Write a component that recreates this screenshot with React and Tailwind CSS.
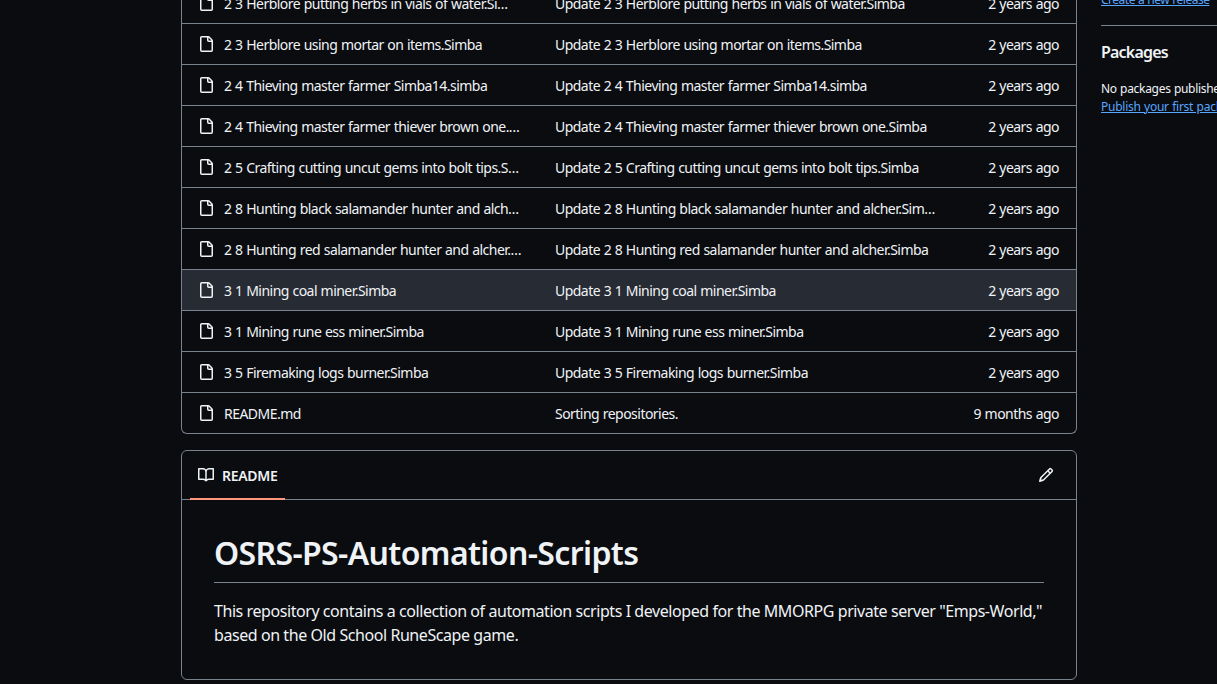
const files = [
  { name: "2 3 Herblore putting herbs in vials of water.Simba", message: "Update 2 3 Herblore putting herbs in vials of water.Simba", age: "2 years ago", namePad: "pr-2" },
  { name: "2 3 Herblore using mortar on items.Simba", message: "Update 2 3 Herblore using mortar on items.Simba", age: "2 years ago" },
  { name: "2 4 Thieving master farmer Simba14.simba", message: "Update 2 4 Thieving master farmer Simba14.simba", age: "2 years ago" },
  { name: "2 4 Thieving master farmer thiever brown one.Simba", message: "Update 2 4 Thieving master farmer thiever brown one.Simba", age: "2 years ago" },
  { name: "2 5 Crafting cutting uncut gems into bolt tips.Simba", message: "Update 2 5 Crafting cutting uncut gems into bolt tips.Simba", age: "2 years ago" },
  { name: "2 8 Hunting black salamander hunter and alcher.Simba", message: "Update 2 8 Hunting black salamander hunter and alcher.Simba", age: "2 years ago" },
  { name: "2 8 Hunting red salamander hunter and alcher.Simba", message: "Update 2 8 Hunting red salamander hunter and alcher.Simba", age: "2 years ago" },
  { name: "3 1 Mining coal miner.Simba", message: "Update 3 1 Mining coal miner.Simba", age: "2 years ago", hover: true },
  { name: "3 1 Mining rune ess miner.Simba", message: "Update 3 1 Mining rune ess miner.Simba", age: "2 years ago" },
  { name: "3 5 Firemaking logs burner.Simba", message: "Update 3 5 Firemaking logs burner.Simba", age: "2 years ago" },
  { name: "README.md", message: "Sorting repositories.", age: "9 months ago" },
];

function FileIcon() {
  return (
    <svg width="16" height="16" viewBox="0 0 16 16" fill="currentColor" className="shrink-0">
      <path d="M2 1.75C2 .784 2.784 0 3.75 0h6.586c.464 0 .909.184 1.237.513l2.914 2.914c.329.328.513.773.513 1.237v9.586A1.75 1.75 0 0 1 13.25 16h-9.5A1.75 1.75 0 0 1 2 14.25Zm1.75-.25a.25.25 0 0 0-.25.25v12.5c0 .138.112.25.25.25h9.5a.25.25 0 0 0 .25-.25V6h-2.75A1.75 1.75 0 0 1 9 4.25V1.5Zm6.75.062V4.25c0 .138.112.25.25.25h2.688l-.011-.013-2.914-2.914-.013-.011Z" />
    </svg>
  );
}

function BookIcon() {
  return (
    <svg width="16" height="16" viewBox="0 0 16 16" fill="currentColor" className="shrink-0">
      <path d="M0 1.75A.75.75 0 0 1 .75 1h4.253c1.227 0 2.317.59 3 1.501A3.743 3.743 0 0 1 11.006 1h4.245a.75.75 0 0 1 .75.75v10.5a.75.75 0 0 1-.75.75h-4.507a2.25 2.25 0 0 0-1.591.659l-.622.621a.75.75 0 0 1-1.06 0l-.622-.621A2.25 2.25 0 0 0 5.258 13H.75a.75.75 0 0 1-.75-.75Zm7.251 10.324.004-5.073-.002-2.253A2.25 2.25 0 0 0 5.003 2.5H1.5v9h3.757a3.75 3.75 0 0 1 1.994.574ZM8.755 4.75l-.004 7.322a3.752 3.752 0 0 1 1.992-.572H14.5v-9h-3.495a2.25 2.25 0 0 0-2.25 2.25Z" />
    </svg>
  );
}

function PencilIcon() {
  return (
    <svg width="16" height="16" viewBox="0 0 16 16" fill="currentColor" className="shrink-0">
      <path d="M11.013 1.427a1.75 1.75 0 0 1 2.474 0l1.086 1.086a1.75 1.75 0 0 1 0 2.474l-8.61 8.61c-.21.21-.47.364-.756.445l-3.251.93a.75.75 0 0 1-.927-.928l.929-3.25c.081-.286.235-.547.445-.758l8.61-8.61Zm.176 4.823L9.75 4.81l-6 6a.249.249 0 0 0-.064.108l-.558 1.953 1.953-.558a.253.253 0 0 0 .108-.064Zm1.238-3.763a.25.25 0 0 0-.354 0L10.811 3.75l1.439 1.44 1.263-1.263a.25.25 0 0 0 0-.354Z" />
    </svg>
  );
}

function FileRow({ file }) {
  return (
    <div className={`flex h-[41px] items-center border-t border-[#7a828e] first:border-t-0 pl-[16px] pr-[17px] ${file.hover ? "bg-[#272b33]" : ""}`}>
      <FileIcon />
      <div className={`ml-[10px] w-[298px] truncate pt-px ${file.namePad || ""}`}>{file.name}</div>
      <div className="ml-[33px] w-[382px] truncate pt-px">{file.message}</div>
      <div className="ml-auto whitespace-nowrap pt-px">{file.age}</div>
    </div>
  );
}

export default function App() {
  return (
    <div className="h-[684px] w-[1217px] overflow-hidden bg-[#0a0c10] text-[14px] text-[#f0f3f6] font-['Noto_Sans','Open_Sans',sans-serif] tracking-[-0.53px] [word-spacing:0.5px]">
      <div className="-mt-[19px] flex items-start pl-[181px]">
        <div className="w-[896px] shrink-0">
          <div className="rounded-b-md border border-t-0 border-[#7a828e] pt-px">
            {files.map((file) => (
              <FileRow key={file.name} file={file} />
            ))}
          </div>

          <div className="mt-4 rounded-md border border-[#7a828e]">
            <div className="flex h-[49px] items-stretch justify-between border-b border-[#7a828e] pl-2 pr-[22px]">
              <div className="-mb-px flex items-center gap-2 border-b-2 border-[#ff967d] pl-2 pr-[7px] pt-px font-semibold tracking-[-0.3px]">
                <BookIcon />
                README
              </div>
              <button>
                <PencilIcon />
              </button>
            </div>
            <div className="px-8 py-8">
              <h1 className="border-b border-[#7a828e] pb-[9px] pt-px text-[32px] font-semibold leading-[40px] tracking-[-0.63px]">
                OSRS-PS-Automation-Scripts
              </h1>
              <p className="mt-4 text-[16px] leading-6 tracking-[-0.43px] [word-spacing:0px]">
                This repository contains a collection of automation scripts I developed for the MMORPG private server "Emps-World," based on the Old School RuneScape game.
              </p>
            </div>
          </div>
        </div>

        <aside className="ml-6 w-[300px] shrink-0">
          <div className="border-b border-[#7a828e] pb-[16px] pt-[7px]">
            <a className="text-[12px] leading-[18px] tracking-[-0.5px] text-[#58a6ff] underline">Create a new release</a>
          </div>
          <h2 className="mt-[14px] text-[16px] font-semibold leading-6 tracking-[-0.8px]">Packages</h2>
          <div className="mt-[16px] text-[12px] leading-[18px] tracking-[-0.3px]">No packages published</div>
          <a className="block text-[12px] leading-[18px] tracking-[-0.25px] text-[#58a6ff] underline">Publish your first package</a>
        </aside>
      </div>
    </div>
  );
}
